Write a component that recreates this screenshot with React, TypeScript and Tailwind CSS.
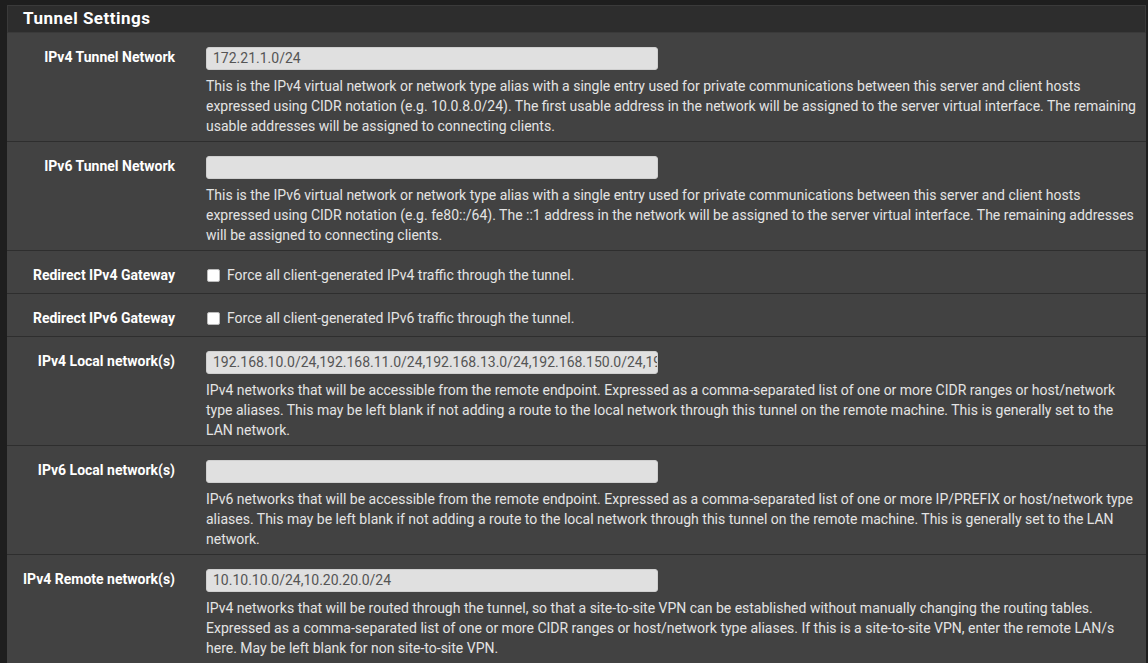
import React from 'react';

type Row =
  | { kind: 'input'; label: string; value: string; help: string }
  | { kind: 'check'; label: string; text: string };

const ROWS: Row[] = [
  {
    kind: 'input',
    label: 'IPv4 Tunnel Network',
    value: '172.21.1.0/24',
    help: 'This is the IPv4 virtual network or network type alias with a single entry used for private communications between this server and client hosts expressed using CIDR notation (e.g. 10.0.8.0/24). The first usable address in the network will be assigned to the server virtual interface. The remaining usable addresses will be assigned to connecting clients.',
  },
  {
    kind: 'input',
    label: 'IPv6 Tunnel Network',
    value: '',
    help: 'This is the IPv6 virtual network or network type alias with a single entry used for private communications between this server and client hosts expressed using CIDR notation (e.g. fe80::/64). The ::1 address in the network will be assigned to the server virtual interface. The remaining addresses will be assigned to connecting clients.',
  },
  { kind: 'check', label: 'Redirect IPv4 Gateway', text: 'Force all client-generated IPv4 traffic through the tunnel.' },
  { kind: 'check', label: 'Redirect IPv6 Gateway', text: 'Force all client-generated IPv6 traffic through the tunnel.' },
  {
    kind: 'input',
    label: 'IPv4 Local network(s)',
    value: '192.168.10.0/24,192.168.11.0/24,192.168.13.0/24,192.168.150.0/24,192.168.200.0/24',
    help: 'IPv4 networks that will be accessible from the remote endpoint. Expressed as a comma-separated list of one or more CIDR ranges or host/network type aliases. This may be left blank if not adding a route to the local network through this tunnel on the remote machine. This is generally set to the LAN network.',
  },
  {
    kind: 'input',
    label: 'IPv6 Local network(s)',
    value: '',
    help: 'IPv6 networks that will be accessible from the remote endpoint. Expressed as a comma-separated list of one or more IP/PREFIX or host/network type aliases. This may be left blank if not adding a route to the local network through this tunnel on the remote machine. This is generally set to the LAN network.',
  },
  {
    kind: 'input',
    label: 'IPv4 Remote network(s)',
    value: '10.10.10.0/24,10.20.20.0/24',
    help: 'IPv4 networks that will be routed through the tunnel, so that a site-to-site VPN can be established without manually changing the routing tables. Expressed as a comma-separated list of one or more CIDR ranges or host/network type aliases. If this is a site-to-site VPN, enter the remote LAN/s here. May be left blank for non site-to-site VPN.',
  },
];

export default function App() {
  return (
    <div className="h-[663px] w-full overflow-hidden bg-[#1e1e1e] pl-[7px] pr-[2px] pt-[5px] font-['Roboto','Liberation_Sans',sans-serif]">
      <div className="bg-[#424242]">
        {/* panel heading */}
        <div className="flex h-[28px] items-center border border-[#3a3a3a] bg-[#2d2d2d] pl-[15px]">
          <h2 className="text-[17px] font-bold tracking-[0.5px] text-white">Tunnel Settings</h2>
        </div>

        {ROWS.map((row, i) => (
          <div
            key={row.label}
            className={`grid grid-cols-[199px_1fr] ${i > 0 ? 'border-t border-[#2e2e2e]' : ''} ${
              row.kind === 'check' ? 'pb-[8px] pt-[14px]' : 'pb-[5px] pt-[14px]'
            }`}
          >
            <label className="pr-[31px] text-right text-[14px] font-bold leading-[20px] text-white">{row.label}</label>
            <div className="pr-[10px]">
              {row.kind === 'input' ? (
                <>
                  <div className="flex h-[23px] w-[452px] items-center overflow-hidden whitespace-nowrap rounded-[3px] border border-[#cfcfcf] bg-[#e0e0e0] pl-[6px] text-[14px] text-[#555]">
                    {row.value}
                  </div>
                  <p className="mt-[6px] text-[14px] leading-[20px] text-[#e4e4e4]">{row.help}</p>
                </>
              ) : (
                <div className="flex items-center gap-[7px] text-[14px] leading-[20px] text-[#e4e4e4]">
                  <span className="ml-px h-[13px] w-[13px] shrink-0 rounded-[2px] border border-[#bbb] bg-white" />
                  <span>{row.text}</span>
                </div>
              )}
            </div>
          </div>
        ))}
      </div>
    </div>
  );
}
